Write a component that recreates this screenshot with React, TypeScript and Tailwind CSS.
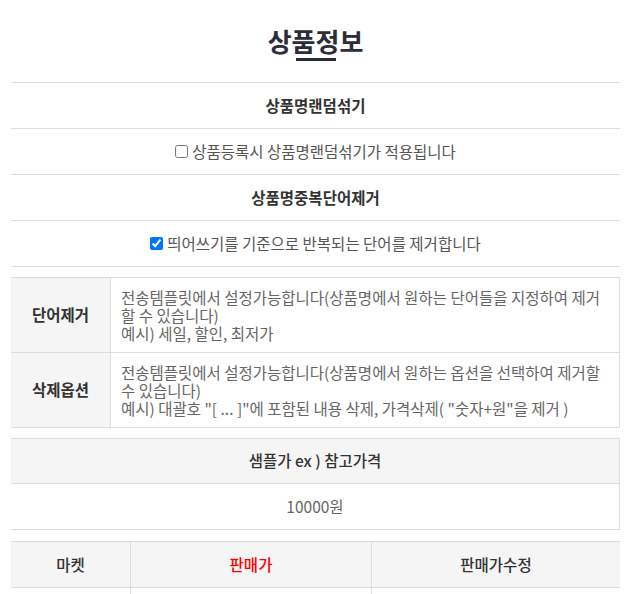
const font = "font-['Noto_Sans_CJK_KR','Noto_Sans',sans-serif]"

function SectionRow({ children, bold = false }: { children: React.ReactNode; bold?: boolean }) {
  return (
    <div
      className={`h-[46px] flex items-center justify-center border-b border-[#dddddd] text-[15.5px] ${
        bold ? 'font-semibold text-[#333]' : 'text-[#555]'
      }`}
    >
      {children}
    </div>
  )
}

function CheckRow({ label, checked }: { label: string; checked: boolean }) {
  return (
    <SectionRow>
      <label className="flex items-center gap-[4px]">
        <input type="checkbox" defaultChecked={checked} className="w-[13px] h-[13px] m-0 accent-[#0075ff]" />
        <span>{label}</span>
      </label>
    </SectionRow>
  )
}

const optionRows = [
  {
    label: '단어제거',
    lines: [
      '전송템플릿에서 설정가능합니다(상품명에서 원하는 단어들을 지정하여 제거할 수 있습니다)',
      '예시) 세일, 할인, 최저가',
    ],
  },
  {
    label: '삭제옵션',
    lines: [
      '전송템플릿에서 설정가능합니다(상품명에서 원하는 옵션을 선택하여 제거할 수 있습니다)',
      '예시) 대괄호 "[ ... ]"에 포함된 내용 삭제, 가격삭제( "숫자+원"을 제거 )',
    ],
  },
]

export default function App() {
  return (
    <div className={`${font} bg-white min-h-[594px] pl-[11px] pr-[19px]`}>
      {/* title */}
      <div className="h-[83px] flex items-center justify-center border-b border-[#dddddd]">
        <h1 className="relative text-[26px] font-bold text-[#2b2e38] leading-none">
          상품정보
          <span className="absolute left-1/2 -translate-x-1/2 -bottom-[7px] w-[40px] h-[3px] bg-[#2b2e38]" />
        </h1>
      </div>

      <SectionRow bold>상품명랜덤섞기</SectionRow>
      <CheckRow label="상품등록시 상품명랜덤섞기가 적용됩니다" checked={false} />
      <SectionRow bold>상품명중복단어제거</SectionRow>
      <CheckRow label="띄어쓰기를 기준으로 반복되는 단어를 제거합니다" checked />

      {/* option table */}
      <div className="mt-[10px] border-t border-r border-b border-[#dddddd]">
        {optionRows.map((row, i) => (
          <div
            key={row.label}
            className={`grid grid-cols-[100px_1fr] ${i > 0 ? 'border-t border-[#dddddd]' : ''}`}
          >
            <div className="bg-[#f5f5f5] border-r border-[#dddddd] flex items-center justify-center text-[15.5px] font-semibold text-[#333]">
              {row.label}
            </div>
            <div className="py-[10px] pl-[10px] pr-[12px] text-[15.5px] leading-[18px] text-[#666]">
              {row.lines.map((l) => (
                <div key={l}>{l}</div>
              ))}
            </div>
          </div>
        ))}
      </div>

      {/* sample price */}
      <div className="mt-[10px] border-t border-r border-b border-[#dddddd] text-[15.5px]">
        <div className="h-[45px] bg-[#f5f5f5] border-b border-[#dddddd] flex items-center justify-center text-[#333] font-medium">
          샘플가 ex ) 참고가격
        </div>
        <div className="h-[45px] flex items-center justify-center text-[#666]">10000원</div>
      </div>

      {/* market table */}
      <div className="mt-[11px] border-t border-[#dddddd] text-[15.5px]">
        <div className="grid grid-cols-[120px_241px_1fr] h-[46px] bg-[#f5f5f5] border-b border-[#dddddd] font-medium text-[#333]">
          <div className="flex items-center justify-center border-r border-[#dddddd]">마켓</div>
          <div className="flex items-center justify-center border-r border-[#dddddd] text-[#ff0000]">판매가</div>
          <div className="flex items-center justify-center">판매가수정</div>
        </div>
        <div className="grid grid-cols-[120px_241px_1fr] h-[46px]">
          <div className="border-r border-[#dddddd]" />
          <div className="border-r border-[#dddddd]" />
          <div />
        </div>
      </div>
    </div>
  )
}
